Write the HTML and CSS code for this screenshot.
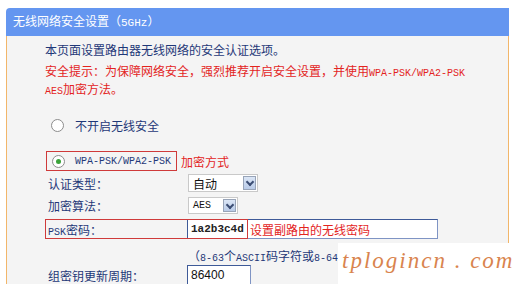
FILE: index.html
```html
<!DOCTYPE html>
<html lang="zh-CN">
<head>
<meta charset="UTF-8">
<meta name="viewport" content="width=device-width, initial-scale=1.0">
<title>无线网络安全设置</title>
<link rel="stylesheet" href="styles.css">
</head>
<body>
<div class="panel">
  <div class="panel-head">无线网络安全设置（<span class="mono">5GHz</span>）</div>
  <div class="panel-body">
    <p class="intro">本页面设置路由器无线网络的安全认证选项。</p>
    <p class="warn">安全提示：为保障网络安全，强烈推荐开启安全设置，并使用<span class="mono">WPA-PSK/WPA2-PSK</span><br><span class="mono">AES</span>加密方法。</p>

    <div class="option off"><span class="radio"></span>不开启无线安全</div>

    <div class="option-line">
      <div class="option boxed"><span class="radio checked"></span><span class="mono">WPA-PSK/WPA2-PSK</span></div>
      <span class="note">加密方式</span>
    </div>

    <div class="row r-auth">
      <span class="label">认证类型：</span>
      <div class="select sel-auth"><span class="sel-text">自动</span><span class="arrow"></span></div>
    </div>

    <div class="row r-alg">
      <span class="label">加密算法：</span>
      <div class="select sel-alg"><span class="sel-text mono">AES</span><span class="arrow"></span></div>
    </div>

    <div class="row r-psk">
      <span class="mark"></span>
      <span class="label"><span class="mono">PSK</span>密码：</span>
      <div class="field psk"><span class="mono val">1a2b3c4d</span><span class="note">设置副路由的无线密码</span></div>
    </div>

    <div class="row r-hint">
      <span class="label"></span>
      <span class="hint">（<span class="mono">8-63</span>个<span class="mono">ASCII</span>码字符或<span class="mono">8-64</span></span>
    </div>

    <div class="row r-group">
      <span class="label">组密钥更新周期：</span>
      <div class="field group">86400</div>
    </div>
  </div>
</div>

<div class="watermark">tplogincn . com</div>
</body>
</html>
```

FILE: styles.css
```css
html, body {
  margin: 0;
  padding: 0;
  height: 100%;
  overflow: hidden;
  background: #fff;
}
body {
  position: relative;
  font-family: "Liberation Sans", "Noto Sans CJK SC", sans-serif;
  font-size: 12px;
  color: #1f3878;
}
.mono {
  font-family: "Liberation Mono", "Noto Sans CJK SC", monospace;
  font-size: 10px;
}
.panel {
  margin: 8px 6px 0 6px;
  width: 503px;
}
.panel-head {
  height: 28px;
  line-height: 28px;
  padding-left: 7px;
  background: #6496f0;
  color: #fff;
  font-size: 12px;
  border-top-left-radius: 4px;
}
.panel-head .mono {
  font-size: 11px;
}
.panel-body {
  background: #f4f4f4;
  border-left: 1px solid #f2b66a;
  border-right: 1px solid #f2b66a;
  padding: 7px 0 0 38px;
  height: 241px;
}
p {
  margin: 0;
  line-height: 17px;
}
.warn {
  margin-top: 4px;
  color: #e3241e;
}
.option {
  display: flex;
  align-items: center;
  height: 20px;
  color: #1f3878;
}
.option.off {
  margin-top: 15px;
  padding-left: 6px;
}
.radio {
  width: 11px;
  height: 11px;
  border: 1px solid #8c8c8c;
  border-radius: 50%;
  background: #fff;
  margin-right: 11px;
  display: flex;
  align-items: center;
  justify-content: center;
  box-sizing: content-box;
}
.radio.checked::after {
  content: "";
  width: 5px;
  height: 5px;
  border-radius: 50%;
  background: #3aa33a;
}
.option-line {
  display: flex;
  align-items: center;
  margin-top: 16px;
  height: 20px;
}
.option.boxed {
  box-sizing: border-box;
  width: 131px;
  margin-left: 1px;
  padding-left: 5px;
  border: 1px solid #cf3a3a;
}
.option.boxed .radio {
  margin-right: 10px;
}
.note {
  color: #e3241e;
  margin-left: 4px;
}
.row {
  display: flex;
  align-items: center;
  position: relative;
}
.label {
  width: 139px;
  padding-left: 3px;
  flex-shrink: 0;
}
.r-auth {
  margin-top: 3px;
  height: 18px;
}
.r-alg {
  margin-top: 5px;
  height: 17px;
}
.r-psk {
  margin-top: 5px;
  height: 20px;
}
.r-hint {
  margin-top: 7px;
  height: 18px;
}
.r-group {
  margin-top: 1px;
  height: 20px;
}
.select {
  display: flex;
  align-items: center;
  box-sizing: border-box;
  margin-left: 1px;
  height: 100%;
  background: #fff;
  border: 1px solid #c9c9c9;
  color: #111;
}
.sel-auth {
  width: 70px;
}
.sel-alg {
  width: 50px;
}
.sel-text {
  flex: 1;
  padding-left: 4px;
}
.arrow {
  width: 13px;
  height: calc(100% - 2px);
  margin-right: 1px;
  box-sizing: border-box;
  border: 1px solid #98a4b8;
  background: linear-gradient(#dbe6f6, #b9cbe8);
  position: relative;
}
.arrow::after {
  content: "";
  position: absolute;
  left: 3px;
  top: 2px;
  width: 4px;
  height: 4px;
  border-right: 2px solid #3c4e74;
  border-bottom: 2px solid #3c4e74;
  transform: rotate(45deg);
}
.field {
  box-sizing: border-box;
  height: 100%;
  background: #fff;
  border: 1px solid #3e5a98;
  border-right-color: #7f94c4;
  border-bottom-color: #7f94c4;
  display: flex;
  align-items: center;
  color: #111;
}
.field.psk {
  width: 251px;
}
.field.psk .val {
  font-size: 11px;
  padding-left: 3px;
  font-weight: bold;
  color: #222;
  width: 56px;
}
.field.psk .note {
  margin-left: 3px;
}
.field.group {
  width: 64px;
  padding-left: 3px;
}
.mark {
  position: absolute;
  left: 0;
  top: 0;
  width: 203px;
  height: 20px;
  box-sizing: border-box;
  border: 1px solid #cf3a3a;
  pointer-events: none;
  z-index: 1;
}
.hint {
  margin-left: 1px;
  white-space: nowrap;
}
.watermark {
  position: absolute;
  left: 338px;
  top: 243px;
  right: 0;
  bottom: 0;
  background: #fff;
  padding: 6px 0 0 4px;
  font-family: "Liberation Serif", serif;
  font-style: italic;
  font-size: 23px;
  line-height: 1;
  letter-spacing: 2px;
  color: #d9844e;
  white-space: nowrap;
}
```
